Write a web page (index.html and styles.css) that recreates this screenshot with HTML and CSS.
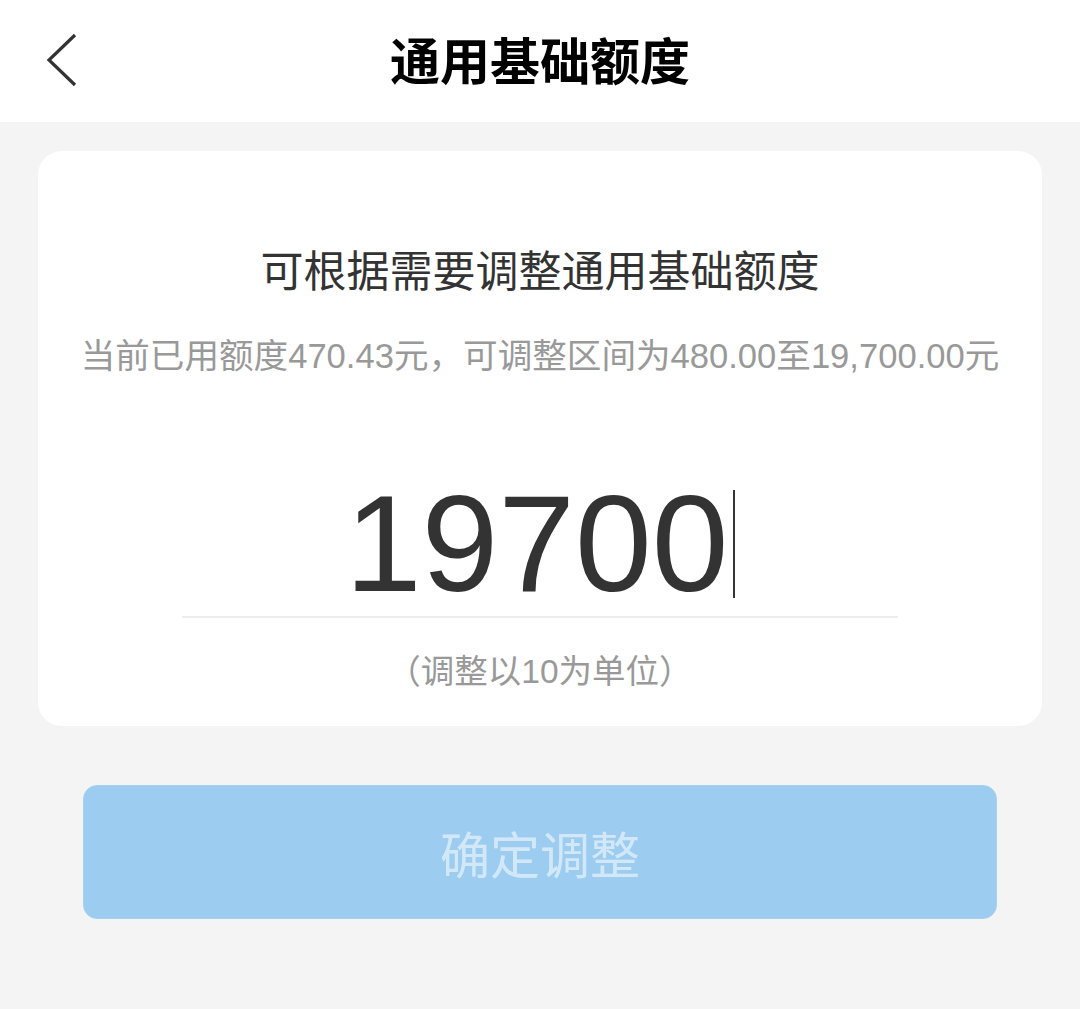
FILE: index.html
```html
<!DOCTYPE html>
<html lang="zh-CN">
<head>
    <meta charset="UTF-8" />
    <title>通用基础额度</title>
    <link rel="stylesheet" href="styles.css">
</head>
<body>
<div class="top-bar">
    <a class="back-btn" href="#">
        <svg width="32" height="54" viewBox="0 0 32 54">
            <polyline points="29,2 3,27 29,52" fill="none" stroke="#333" stroke-width="3.2" />
        </svg>
    </a>
    <h1>通用基础额度</h1>
    <span></span>
</div>

<div class="quota-card">
    <p class="card-title">可根据需要调整通用基础额度</p>
    <p class="card-desc">当前已用额度470.43元，可调整区间为480.00至19,700.00元</p>
    <div class="amount-box">
        <span class="amount">19700</span><span class="caret"></span>
    </div>
    <p class="card-note">（调整以10为单位）</p>
</div>

<button class="confirm-btn" disabled>确定调整</button>
</body>
</html>
```

FILE: styles.css
```css
body {
    margin: 0;
    font-family: "Liberation Sans", "Noto Sans CJK SC", sans-serif;
    background: #f4f4f4;
    width: 1080px;
    min-height: 1009px;
}

.top-bar {
    height: 122px;
    background: white;
    display: grid;
    grid-template-columns: 1fr auto 1fr;
    align-items: center;
}

.back-btn {
    display: flex;
    padding-left: 46px;
    margin-top: -2px;
}

.top-bar h1 {
    margin: 0;
    font-family: "Noto Sans CJK SC", sans-serif;
    font-size: 50px;
    font-weight: 700;
    color: #000;
    margin-top: -6px;
}

.quota-card {
    margin: 29px 38px 0;
    background: white;
    border-radius: 24px;
    padding: 86px 0 32px;
    display: flex;
    flex-direction: column;
    align-items: center;
}

.card-title {
    margin: 0;
    font-family: "Noto Sans CJK SC", sans-serif;
    font-size: 43px;
    line-height: 62px;
    color: #333;
}

.card-desc {
    margin: 32px 0 0;
    font-size: 34.6px;
    line-height: 50px;
    color: #999;
}

.amount-box {
    margin-top: 89px;
    width: 716px;
    height: 146px;
    border-bottom: 2px solid #eeeeee;
    display: flex;
    justify-content: center;
    align-items: center;
}

.amount {
    font-size: 138px;
    line-height: 146px;
    color: #333;
}

.caret {
    width: 2.5px;
    height: 108px;
    background: #333;
    margin-left: 4px;
    margin-top: 2px;
}

.card-note {
    margin: 32px 0 0;
    font-size: 33.5px;
    line-height: 44px;
    color: #999;
}

.confirm-btn {
    display: block;
    margin: 59px 83px 0;
    width: 914px;
    height: 134px;
    border: 1px solid #a7d2f1;
    border-radius: 14px;
    background: #9ccdf0;
    color: rgba(255, 255, 255, 0.55);
    font-family: "Noto Sans CJK SC", sans-serif;
    font-size: 50px;
    cursor: pointer;
}
```
